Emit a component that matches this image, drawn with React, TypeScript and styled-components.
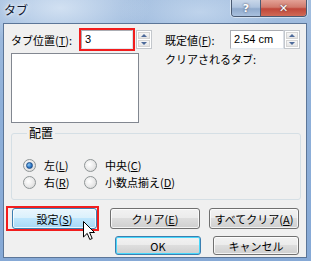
import styled, { createGlobalStyle } from 'styled-components';

const Global = createGlobalStyle`
  html, body { margin: 0; padding: 0; }
  body {
    font-family: "Noto Sans CJK JP", "Noto Sans", sans-serif;
    font-size: 11px;
    color: #000;
  }
`;

const Window = styled.div`
  position: relative;
  width: 311px;
  height: 261px;
  box-sizing: border-box;
  display: flex;
  flex-direction: column;
  overflow: hidden;
  background:
    radial-gradient(ellipse 90px 40px at 60px 8px, rgba(225, 236, 248, 0.75), transparent),
    radial-gradient(ellipse 80px 30px at 200px 12px, rgba(210, 226, 244, 0.6), transparent),
    linear-gradient(180deg, #a3bedf 0%, #8fb0d9 40%, #86a9d6 100%);
`;

const TitleBar = styled.div`
  height: 23px;
  flex: none;
  display: flex;
  align-items: flex-start;
  padding: 0 4px 0 4px;
`;

const Title = styled.div`
  padding-top: 3px;
  font-size: 12px;
  line-height: 14px;
  color: #101830;
  text-shadow: 0 0 6px #fff, 0 0 3px #fff;
`;

const CaptionGroup = styled.div`
  margin-left: auto;
  display: flex;
  height: 16px;
  border: 1px solid #4a5a72;
  border-top: none;
  border-radius: 0 0 4px 4px;
  overflow: hidden;
  box-shadow: 0 0 0 1px rgba(255, 255, 255, 0.5);
`;

const CaptionButton = styled.div<{ $close?: boolean }>`
  width: ${(p) => (p.$close ? 45 : 28)}px;
  display: flex;
  align-items: center;
  justify-content: center;
  color: #fff;
  font-family: "DejaVu Sans", sans-serif;
  font-weight: 700;
  font-size: 11px;
  text-shadow: 0 0 2px #334;
  background: ${(p) =>
    p.$close
      ? 'linear-gradient(180deg, #e3a196 0%, #d17a6c 45%, #c0473a 55%, #d06a56 100%)'
      : 'linear-gradient(180deg, #c9d7e9 0%, #aec3de 45%, #90aacc 55%, #a9c0de 100%)'};
  & + & {
    border-left: 1px solid #4a5a72;
  }
`;

const Client = styled.div`
  flex: 1;
  margin: 0 4px 3px 3px;
  border: 1px solid #5c7698;
  background: #f0f0f0;
  display: flex;
  flex-direction: column;
  padding: 6px 0 0 7px;
`;

const TopSection = styled.div`
  display: flex;
  gap: 13px;
`;

const Column = styled.div`
  display: flex;
  flex-direction: column;
`;

const FieldRow = styled.div`
  display: flex;
  align-items: center;
  height: 19px;
`;

const Label = styled.span<{ $w?: number }>`
  display: inline-block;
  width: ${(p) => (p.$w ? `${p.$w}px` : 'auto')};
  line-height: 14px;
  white-space: nowrap;
`;

const TextBox = styled.div<{ $w: number; $marked?: boolean }>`
  box-sizing: border-box;
  width: ${(p) => p.$w}px;
  height: 19px;
  border: 1px solid #abadb3;
  border-right-color: #dbdfe6;
  border-bottom-color: #e3e9ef;
  background: #fff;
  padding: 0 3px;
  line-height: 16px;
  font-family: "Liberation Sans", sans-serif;
  font-size: 11px;
  ${(p) => p.$marked && 'outline: 2px solid #f21d1d; outline-offset: 0px;'}
`;

const Spin = styled.div<{ $gap: number }>`
  box-sizing: border-box;
  margin-left: ${(p) => p.$gap}px;
  width: 16px;
  height: 19px;
  display: flex;
  flex-direction: column;
  border: 1px solid #c3c7cc;
  background: #fff;
  padding: 1px;
  gap: 1px;
`;

const SpinHalf = styled.div<{ $down?: boolean }>`
  flex: 1;
  display: flex;
  align-items: center;
  justify-content: center;
  background: linear-gradient(180deg, #f6f6f6, #e4e4e4);
  border: 1px solid #d5d5d5;
  &::after {
    content: '';
    width: 0;
    height: 0;
    border-left: 3px solid transparent;
    border-right: 3px solid transparent;
    ${(p) => (p.$down ? 'border-top: 3px solid #4d6a9a;' : 'border-bottom: 3px solid #4d6a9a;')}
  }
`;

const ListBox = styled.div`
  box-sizing: border-box;
  margin-top: 4px;
  width: 128px;
  height: 70px;
  border: 1px solid #828790;
  background: #fff;
`;

const SubLabel = styled.div`
  margin-top: 3px;
  line-height: 14px;
`;

const GroupBox = styled.fieldset`
  margin: 3px 0 0 0;
  width: 290px;
  box-sizing: border-box;
  height: 74px;
  border: 1px solid #d5dfe5;
  border-radius: 3px;
  padding: 0 0 0 11px;
  min-inline-size: 0;
`;

const Legend = styled.legend`
  padding: 0 2px;
  margin-left: 4px;
  line-height: 14px;
  font-size: 12px;
`;

const RadioGrid = styled.div`
  margin-top: 19px;
  display: grid;
  grid-template-columns: 61px auto;
  row-gap: 4px;
`;

const RadioItem = styled.div`
  display: flex;
  align-items: center;
  gap: 8px;
  height: 13px;
  line-height: 13px;
`;

const RadioCircle = styled.span<{ $checked?: boolean }>`
  box-sizing: border-box;
  width: 13px;
  height: 13px;
  border-radius: 50%;
  border: 1px solid #8f9596;
  background: radial-gradient(circle at 40% 40%, #ffffff 0%, #e8e8e8 55%, #cfcfcf 100%);
  display: flex;
  align-items: center;
  justify-content: center;
  &::after {
    content: '';
    display: ${(p) => (p.$checked ? 'block' : 'none')};
    width: 5px;
    height: 5px;
    border-radius: 50%;
    border: 1px solid #1e4f8a;
    background: radial-gradient(circle at 35% 35%, #8cc8f4 0%, #2a74c4 60%, #164f92 100%);
  }
`;

const ButtonRow = styled.div<{ $pad: number; $top: number }>`
  display: flex;
  padding-left: ${(p) => p.$pad}px;
  margin-top: ${(p) => p.$top}px;
`;

const Marker = styled.div`
  display: flex;
  border: 2px solid #f21d1d;
  padding: 0 0 0 4px;
  margin: -2px -2px -1px -6px;
`;

const Button = styled.div<{
  $w: number;
  $h: number;
  $gap?: number;
  $hover?: boolean;
  $default?: boolean;
}>`
  box-sizing: border-box;
  width: ${(p) => p.$w}px;
  height: ${(p) => p.$h}px;
  margin-left: ${(p) => p.$gap ?? 0}px;
  display: flex;
  align-items: center;
  justify-content: center;
  border-radius: 3px;
  line-height: 14px;
  border: 1px solid ${(p) => (p.$hover || p.$default ? '#3c7fb1' : '#707070')};
  background: ${(p) =>
    p.$hover
      ? 'linear-gradient(180deg, #eaf6fd 0%, #d9f0fc 50%, #bee6fd 50%, #a7d9f5 100%)'
      : 'linear-gradient(180deg, #f2f2f2 0%, #ebebeb 50%, #dddddd 50%, #cfcfcf 100%)'};
  box-shadow: inset 0 0 0 1px ${(p) => (p.$default ? '#48d8fb' : 'rgba(255,255,255,0.75)')};
`;

const Cursor = styled.svg`
  position: absolute;
  left: 83px;
  top: 221px;
`;

export default function App() {
  return (
    <>
      <Global />
      <Window>
        <TitleBar>
          <Title>タブ</Title>
          <CaptionGroup>
            <CaptionButton>?</CaptionButton>
            <CaptionButton $close>✕</CaptionButton>
          </CaptionGroup>
        </TitleBar>
        <Client>
          <TopSection>
            <Column>
              <FieldRow>
                <Label $w={70}>
                  タブ位置(<u>T</u>):
                </Label>
                <TextBox $w={52} $marked>
                  3
                </TextBox>
                <Spin $gap={3}>
                  <SpinHalf />
                  <SpinHalf $down />
                </Spin>
              </FieldRow>
              <ListBox />
            </Column>
            <Column>
              <FieldRow>
                <Label $w={65}>
                  既定値(<u>F</u>):
                </Label>
                <TextBox $w={54}>2.54 cm</TextBox>
                <Spin $gap={0}>
                  <SpinHalf />
                  <SpinHalf $down />
                </Spin>
              </FieldRow>
              <SubLabel>クリアされるタブ:</SubLabel>
            </Column>
          </TopSection>

          <GroupBox>
            <Legend>配置</Legend>
            <RadioGrid>
              <RadioItem>
                <RadioCircle $checked />
                <span>
                  左(<u>L</u>)
                </span>
              </RadioItem>
              <RadioItem>
                <RadioCircle />
                <span>
                  中央(<u>C</u>)
                </span>
              </RadioItem>
              <RadioItem>
                <RadioCircle />
                <span>
                  右(<u>R</u>)
                </span>
              </RadioItem>
              <RadioItem>
                <RadioCircle />
                <span>
                  小数点揃え(<u>D</u>)
                </span>
              </RadioItem>
            </RadioGrid>
          </GroupBox>

          <ButtonRow $pad={1} $top={8}>
            <Marker>
              <Button $w={85} $h={21} $hover>
                設定(<u>S</u>)
              </Button>
            </Marker>
            <Button $w={90} $h={21} $gap={13}>
              クリア(<u>E</u>)
            </Button>
            <Button $w={90} $h={21} $gap={9}>
              すべてクリア(<u>A</u>)
            </Button>
          </ButtonRow>
          <ButtonRow $pad={104} $top={6}>
            <Button $w={86} $h={19} $default>
              OK
            </Button>
            <Button $w={86} $h={19} $gap={12}>
              キャンセル
            </Button>
          </ButtonRow>
        </Client>
        <Cursor width="13" height="20" viewBox="0 0 13 20">
          <path
            d="M0.5 0.5 L0.5 16 L4.2 12.4 L6.8 18.5 L9.2 17.5 L6.6 11.5 L11.5 11.5 Z"
            fill="#fff"
            stroke="#000"
            strokeWidth="1"
            strokeLinejoin="miter"
          />
        </Cursor>
      </Window>
    </>
  );
}
